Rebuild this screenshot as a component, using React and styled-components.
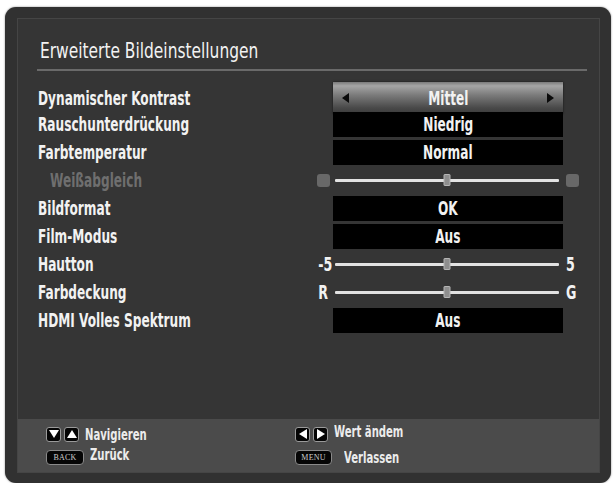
import React from "react";
import styled, { createGlobalStyle } from "styled-components";

const GlobalStyle = createGlobalStyle`
  html, body {
    margin: 0;
    padding: 0;
    background: #ffffff;
  }
  body {
    font-family: "DejaVu Sans Condensed", "DejaVu Sans", sans-serif;
    font-stretch: condensed;
  }
`;

const Frame = styled.div`
  margin: 7px 0 0 5px;
  width: 606px;
  height: 476px;
  box-sizing: border-box;
  padding: 11px 11px 10px 12px;
  background: #313131;
  border-radius: 11px;
  box-shadow: 0 0 2px rgba(0, 0, 0, 0.5);
`;

const Panel = styled.div`
  height: 100%;
  box-sizing: border-box;
  border: 1px solid #454545;
  background: #353535;
  display: flex;
  flex-direction: column;
`;

const Header = styled.div`
  height: 52px;
  margin: 0 12px 0 19px;
  border-bottom: 2px solid #6a6a6a;
  display: flex;
  align-items: center;
  padding: 12px 0 0 3px;
  box-sizing: border-box;
`;

/* condensed look: the installed fonts are wider than the TV's font */
const Title = styled.h1`
  margin: 0;
  font-size: 22px;
  font-weight: normal;
  color: #f2f2f2;
  white-space: nowrap;
  transform: scaleX(0.78);
  transform-origin: left center;
`;

const List = styled.div`
  flex: 1;
  padding: 11px 0 0 20px;
  display: flex;
  flex-direction: column;
`;

const Row = styled.div`
  height: 28px;
  display: grid;
  grid-template-columns: 275px 20px 230px 20px;
  align-items: center;
`;

const Label = styled.div`
  font-size: 19px;
  font-weight: bold;
  color: ${(p) => (p.$dim ? "#6f6f6f" : "#f2f2f2")};
  padding-left: ${(p) => (p.$dim ? "17px" : "0")};
  white-space: nowrap;
  transform: scaleX(0.71);
  transform-origin: left center;
`;

const Value = styled.div`
  grid-column: 3;
  height: 25px;
  background: #000;
  color: #f2f2f2;
  display: flex;
  align-items: center;
  justify-content: center;
`;

const Selected = styled(Value)`
  height: 32px;
  justify-content: space-between;
  padding: 0 9px;
  background: linear-gradient(#7a7a7a 0%, #a5a5a5 12%, #7c7c7c 40%, #4a4a4a 80%, #3a3a3a 100%);
  box-shadow: 0 0 2px rgba(0, 0, 0, 0.6);
`;

const ValueText = styled.span`
  display: inline-block;
  font-size: 19px;
  font-weight: bold;
  white-space: nowrap;
  transform: scaleX(0.71);
`;

const Arrow = styled.span`
  width: 0;
  height: 0;
  border-top: 5px solid transparent;
  border-bottom: 5px solid transparent;
  ${(p) =>
    p.$dir === "left"
      ? "border-right: 7px solid #0a0a0a;"
      : "border-left: 7px solid #0a0a0a;"}
`;

const SideText = styled.div`
  grid-column: ${(p) => (p.$side === "left" ? 2 : 4)};
  font-size: 19px;
  font-weight: bold;
  color: #f2f2f2;
  text-align: ${(p) => (p.$side === "left" ? "right" : "left")};
  padding: ${(p) => (p.$side === "left" ? "0 8px 0 0" : "0 0 0 4px")};
  transform: scaleX(0.74);
  transform-origin: ${(p) => (p.$side === "left" ? "right" : "left")} center;
`;

const Dot = styled.div`
  grid-column: ${(p) => (p.$side === "left" ? 2 : 4)};
  justify-self: ${(p) => (p.$side === "left" ? "start" : "end")};
  margin: ${(p) => (p.$side === "left" ? "0 0 0 4px" : "0 4px 0 0")};
  width: 13px;
  height: 13px;
  border-radius: 3px;
  background: #686868;
`;

const Track = styled.div`
  grid-column: 3;
  position: relative;
  height: 3px;
  margin: 0 4px 0 2px;
  background: #e2e2e2;
  border-radius: 1px;
`;

const Thumb = styled.div`
  position: absolute;
  left: 50%;
  top: 50%;
  width: 5px;
  height: 10px;
  transform: translate(-50%, -50%);
  background: #8e8e8e;
  border: 1px solid #b5b5b5;
  border-radius: 1px;
`;

const Footer = styled.div`
  height: 53px;
  background: #4b4b4b;
  display: grid;
  grid-template-columns: 249px 1fr;
  grid-template-rows: 23px 23px;
  align-content: center;
  padding-left: 28px;
  box-sizing: border-box;
`;

const Hint = styled.div`
  display: flex;
  align-items: center;
  gap: 4px;
  white-space: nowrap;
`;

const HintText = styled.span`
  display: inline-block;
  font-size: 16px;
  font-weight: bold;
  color: #ececec;
  transform: scaleX(0.7);
  transform-origin: left center;
  margin-top: ${(p) => (p.$raise ? "-5px" : "0")};
`;

const Keys = styled.div`
  display: flex;
  gap: 3px;
  margin-right: 2px;
`;

const Key = styled.div`
  width: 13px;
  height: 13px;
  border-radius: 3px;
  background: #050505;
  border: 1px solid #9a9a9a;
  display: flex;
  align-items: center;
  justify-content: center;
`;

const Tri = styled.span`
  width: 0;
  height: 0;
  ${(p) => {
    switch (p.$dir) {
      case "down":
        return "border-left: 5px solid transparent; border-right: 5px solid transparent; border-top: 8px solid #fff;";
      case "up":
        return "border-left: 5px solid transparent; border-right: 5px solid transparent; border-bottom: 8px solid #fff;";
      case "left":
        return "border-top: 5px solid transparent; border-bottom: 5px solid transparent; border-right: 8px solid #fff;";
      default:
        return "border-top: 5px solid transparent; border-bottom: 5px solid transparent; border-left: 8px solid #fff;";
    }
  }}
`;

const Pill = styled.div`
  width: ${(p) => p.$w}px;
  height: 13px;
  border-radius: 4px;
  background: #050505;
  border: 1px solid #8a8a8a;
  color: #cfcfcf;
  font-family: "Liberation Serif", serif;
  font-size: 8px;
  display: flex;
  align-items: center;
  justify-content: center;
  margin-right: ${(p) => p.$gap}px;
  letter-spacing: 0.2px;
`;

function Slider({ left, right, dots }) {
  return (
    <>
      {dots ? <Dot $side="left" /> : <SideText $side="left">{left}</SideText>}
      <Track>
        <Thumb />
      </Track>
      {dots ? <Dot $side="right" /> : <SideText $side="right">{right}</SideText>}
    </>
  );
}

function Box({ children }) {
  return (
    <Value>
      <ValueText>{children}</ValueText>
    </Value>
  );
}

export default function App() {
  return (
    <>
      <GlobalStyle />
      <Frame>
        <Panel>
          <Header>
            <Title>Erweiterte Bildeinstellungen</Title>
          </Header>
          <List>
            <Row>
              <Label>Dynamischer Kontrast</Label>
              <Selected>
                <Arrow $dir="left" />
                <ValueText>Mittel</ValueText>
                <Arrow $dir="right" />
              </Selected>
            </Row>
            <Row>
              <Label>Rauschunterdrückung</Label>
              <Box>Niedrig</Box>
            </Row>
            <Row>
              <Label>Farbtemperatur</Label>
              <Box>Normal</Box>
            </Row>
            <Row>
              <Label $dim>Weißabgleich</Label>
              <Slider dots />
            </Row>
            <Row>
              <Label>Bildformat</Label>
              <Box>OK</Box>
            </Row>
            <Row>
              <Label>Film-Modus</Label>
              <Box>Aus</Box>
            </Row>
            <Row>
              <Label>Hautton</Label>
              <Slider left="-5" right="5" />
            </Row>
            <Row>
              <Label>Farbdeckung</Label>
              <Slider left="R" right="G" />
            </Row>
            <Row>
              <Label>HDMI Volles Spektrum</Label>
              <Box>Aus</Box>
            </Row>
          </List>
          <Footer>
            <Hint>
              <Keys>
                <Key><Tri $dir="down" /></Key>
                <Key><Tri $dir="up" /></Key>
              </Keys>
              <HintText>Navigieren</HintText>
            </Hint>
            <Hint>
              <Keys>
                <Key><Tri $dir="left" /></Key>
                <Key><Tri $dir="right" /></Key>
              </Keys>
              <HintText $raise>Wert ändem</HintText>
            </Hint>
            <Hint>
              <Pill $w={36} $gap={2}>BACK</Pill>
              <HintText $raise>Zurück</HintText>
            </Hint>
            <Hint>
              <Pill $w={35} $gap={8}>MENU</Pill>
              <HintText>Verlassen</HintText>
            </Hint>
          </Footer>
        </Panel>
      </Frame>
    </>
  );
}
